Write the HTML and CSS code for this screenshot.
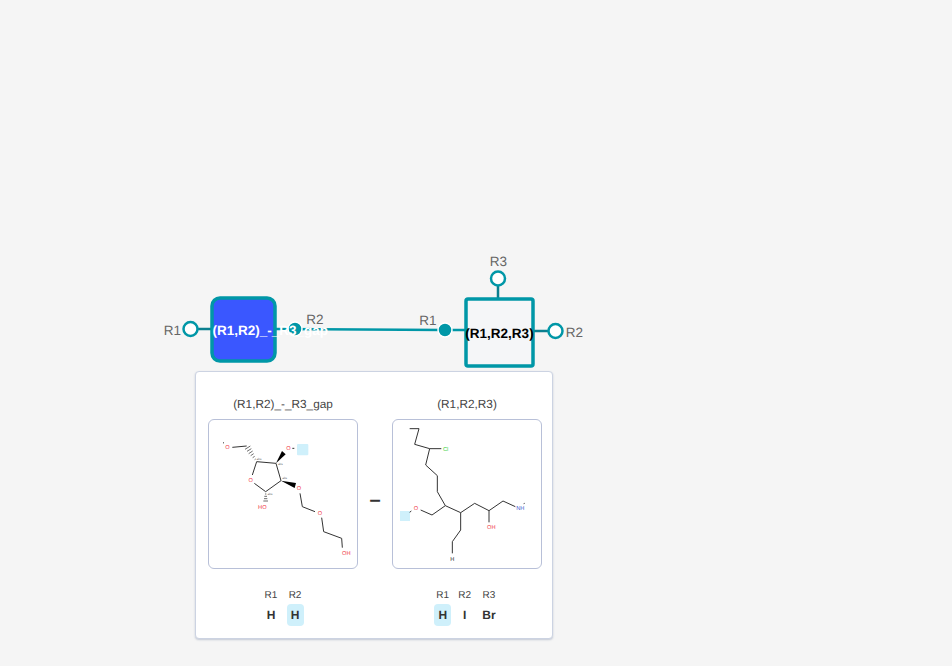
FILE: index.html
```html
<!DOCTYPE html>
<html lang="en">
<head>
    <meta charset="UTF-8">
    <meta name="viewport" content="width=device-width, initial-scale=1.0">
    <title>Polymer Viewer</title>
    <link rel="stylesheet" href="styles.css">
</head>
<body>
    <!-- monomer graph, free canvas -->
    <svg class="graph" width="952" height="666" viewBox="0 0 952 666">
        <line class="stem" x1="197" y1="329" x2="212" y2="329"/>
        <line class="stem" x1="534" y1="331" x2="549" y2="331"/>
        <line class="stem" x1="498" y1="285" x2="498" y2="299"/>
        <line class="bond" x1="276" y1="329" x2="445" y2="330"/>
        <line class="bond" x1="445" y1="330" x2="466" y2="330"/>

        <rect class="node node-gap" x="212" y="298" width="63" height="63" rx="8"/>
        <rect class="node node-plain" x="466" y="299" width="67" height="67" rx="2"/>

        <circle class="port" cx="190.500" cy="329" r="7"/>
        <circle class="port" cx="498" cy="278.500" r="7"/>
        <circle class="port" cx="555.500" cy="331" r="7"/>
        <circle class="port-on" cx="295" cy="329" r="7"/>
        <circle class="port-on" cx="445" cy="330" r="7"/>

        <text class="r-label" x="172.500" y="335">R1</text>
        <text class="r-label" x="315" y="324">R2</text>
        <text class="r-label" x="428" y="325">R1</text>
        <text class="r-label" x="498.500" y="266">R3</text>
        <text class="r-label" x="574.500" y="337">R2</text>

        <text class="node-name name-white" x="212.500" y="335">(R1,R2)_-_R3_gap</text>
        <text class="node-name name-black" x="499.500" y="338">(R1,R2,R3)</text>
    </svg>

    <div class="tooltip">
        <div class="monomer">
            <div class="monomer-title">(R1,R2)_-_R3_gap</div>
            <div class="structure">
                <svg class="mol" viewBox="12 15 444 444">
                    <rect class="attach" x="276" y="87" width="34" height="34" rx="3"/>
                    <polyline class="b" points="82,97 125,93"/>
                    <polyline class="b" points="54,83 57,84"/>
                    <polyline class="b" points="142,180 155,140 213,145 228,197 182,230 148,205"/>
                    <polyline class="b" points="262,100 268,100"/>
                    <polyline class="b" points="285,235 292,275 330,290"/>
                    <polyline class="b" points="350,308 356,350 410,370 412,398"/>
                    <path class="hash" d="M149 134L152 132M143 128L149 124M137 122L146 116M131 116L143 108M126 109L139 101M120 103L136 93"/>
                    <path class="hash" d="M180 237H184M178 244H186M177 251H187M175 258H189"/>
                    <polygon class="wedge" points="213,145 231,108 242,118"/>
                    <polygon class="wedge" points="228,197 273,204 269,219"/>
                    <text class="atom red" x="67" y="103">O</text>
                    <text class="atom red" x="250" y="104">O</text>
                    <text class="atom red" x="137" y="201">O</text>
                    <text class="atom red" x="282" y="224">O</text>
                    <text class="atom red" x="345" y="299">O</text>
                    <text class="atom red" x="172" y="281">HO</text>
                    <text class="atom red" x="424" y="419">OH</text>
                    <text class="stereo" x="162" y="135">abs</text>
                    <text class="stereo" x="226" y="150">abs</text>
                    <text class="stereo" x="239" y="192">abs</text>
                    <text class="stereo" x="195" y="240">abs</text>
                </svg>
            </div>
            <div class="rgroups cols-2">
                <span class="r-name">R1</span>
                <span class="r-name">R2</span>
                <span class="r-value">H</span>
                <span class="r-value active">H</span>
            </div>
        </div>
        <span class="minus">–</span>
        <div class="monomer">
            <div class="monomer-title">(R1,R2,R3)</div>
            <div class="structure">
                <svg class="mol" viewBox="15 15 444 444">
                    <rect class="attach" x="36" y="288" width="30" height="30"/>
                    <polyline class="b" points="65,41 93,41 80,88 125,101 160,101"/>
                    <polyline class="b" points="125,101 113,150 148,182 148,230 172,272 132,300 98,285"/>
                    <polyline class="b" points="70,288 65,292"/>
                    <polyline class="b" points="172,272 218,293 260,265 303,287 345,258 382,275"/>
                    <polyline class="b" points="303,287 303,322"/>
                    <polyline class="b" points="218,293 218,345 193,380 193,415"/>
                    <polyline class="b" points="407,266 410,265"/>
                    <text class="atom green" x="173" y="108">Cl</text>
                    <text class="atom red" x="84" y="285">O</text>
                    <text class="atom blue" x="397" y="286">NH</text>
                    <text class="atom red" x="310" y="342">OH</text>
                    <text class="atom dark" x="193" y="437">H</text>
                </svg>
            </div>
            <div class="rgroups cols-3">
                <span class="r-name">R1</span>
                <span class="r-name">R2</span>
                <span class="r-name">R3</span>
                <span class="r-value active">H</span>
                <span class="r-value">I</span>
                <span class="r-value">Br</span>
            </div>
        </div>
    </div>
</body>
</html>
```

FILE: styles.css
```css
body {
    margin: 0;
    height: 666px;
    overflow: hidden;
    position: relative;
    background-color: #f5f5f5;
    font-family: "Liberation Sans", Arial, sans-serif;
    color: #333;
    text-rendering: geometricPrecision;
}
.graph {
    position: absolute;
    left: 0;
    top: 0;
}
.stem {
    stroke: #0b7f8f;
    stroke-width: 2.5;
}
.bond {
    stroke: #0097a7;
    stroke-width: 2.5;
}
.node {
    stroke: #0097a7;
    stroke-width: 3.5;
}
.node-gap {
    fill: #3a57ff;
}
.node-plain {
    fill: #f5f6f8;
}
.port {
    fill: #fff;
    stroke: #0097a7;
    stroke-width: 2.5;
}
.port-on {
    fill: #0097a7;
    stroke: #fff;
    stroke-width: 1.500;
}
.r-label {
    font-size: 13.5px;
    fill: #666;
    text-anchor: middle;
}
.node-name {
    font-size: 13.5px;
    font-weight: bold;
}
.name-white {
    fill: #fff;
}
.name-black {
    fill: #000;
    text-anchor: middle;
}
.tooltip {
    position: absolute;
    left: 195px;
    top: 371px;
    width: 358px;
    box-sizing: border-box;
    display: flex;
    padding: 24px 10px 12px 12px;
    background-color: #fff;
    border: 1px solid #ccd3e2;
    border-radius: 4px;
    box-shadow: 0 1px 2px rgba(120, 135, 165, 0.4);
}
.monomer {
    width: 150px;
    display: flex;
    flex-direction: column;
    align-items: center;
}
.monomer-title {
    font-size: 11.8px;
    line-height: 16px;
    color: #444;
    margin-bottom: 7px;
}
.structure {
    width: 150px;
    height: 150px;
    box-sizing: border-box;
    border: 1px solid #b8c0d8;
    border-radius: 6px;
    background-color: #fff;
}
.mol {
    display: block;
    width: 148px;
    height: 148px;
}
.attach {
    fill: #cff0fb;
}
.b {
    fill: none;
    stroke: #333;
    stroke-width: 3;
}
.hash {
    fill: none;
    stroke: #222;
    stroke-width: 2;
}
.wedge {
    fill: #000;
}
.atom {
    font-size: 17px;
    text-anchor: middle;
}
.stereo {
    font-size: 9px;
    fill: #666;
    text-anchor: middle;
}
.red {
    fill: #f0404a;
}
.green {
    fill: #40d040;
}
.blue {
    fill: #4a5fd0;
}
.dark {
    fill: #333;
}
.minus {
    width: 34px;
    margin-top: 94px;
    text-align: center;
    align-self: flex-start;
    font-size: 20px;
    line-height: 20px;
    font-weight: bold;
    color: #333;
}
.rgroups {
    display: grid;
    column-gap: 7px;
    row-gap: 2px;
    margin-top: 21px;
    justify-items: center;
}
.cols-2 {
    grid-template-columns: repeat(2, auto);
}
.cols-3 {
    grid-template-columns: repeat(3, auto);
}
.r-name {
    font-size: 10px;
    line-height: 12px;
    color: #444;
}
.r-value {
    font-size: 12px;
    line-height: 22px;
    font-weight: bold;
    padding: 0 4.2px;
    border-radius: 4px;
}
.r-value.active {
    background-color: #cff0fb;
}
```
